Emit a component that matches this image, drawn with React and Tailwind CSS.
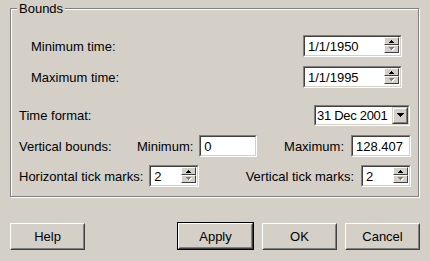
import React from "react";

function Sunken({ className = "", children }) {
  return (
    <div className={`border border-t-[#808080] border-l-[#808080] border-b-white border-r-white ${className}`}>
      <div className="h-full w-full border border-t-[#404040] border-l-[#404040] border-b-[#d4d0c8] border-r-[#d4d0c8] bg-white flex items-center">
        {children}
      </div>
    </div>
  );
}

function UpArrow() {
  return (
    <svg width="5" height="3" viewBox="0 0 5 3" shapeRendering="crispEdges">
      <rect x="2" y="0" width="1" height="1" fill="#000" />
      <rect x="1" y="1" width="3" height="1" fill="#000" />
      <rect x="0" y="2" width="5" height="1" fill="#000" />
    </svg>
  );
}

function DownArrowDisabled() {
  return (
    <svg width="6" height="4" viewBox="0 0 6 4" shapeRendering="crispEdges">
      <rect x="1" y="1" width="5" height="1" fill="#fff" />
      <rect x="2" y="2" width="3" height="1" fill="#fff" />
      <rect x="3" y="3" width="1" height="1" fill="#fff" />
      <rect x="0" y="0" width="5" height="1" fill="#808080" />
      <rect x="1" y="1" width="3" height="1" fill="#808080" />
      <rect x="2" y="2" width="1" height="1" fill="#808080" />
    </svg>
  );
}

function DownArrow() {
  return (
    <svg width="7" height="4" viewBox="0 0 7 4" shapeRendering="crispEdges">
      <rect x="0" y="0" width="7" height="1" fill="#000" />
      <rect x="1" y="1" width="5" height="1" fill="#000" />
      <rect x="2" y="2" width="3" height="1" fill="#000" />
      <rect x="3" y="3" width="1" height="1" fill="#000" />
    </svg>
  );
}

function SpinBtn({ children }) {
  return (
    <div className="w-[15px] h-[8px] bg-[#d4d0c8] border border-t-white border-l-white border-b-[#404040] border-r-[#404040] flex items-center justify-center">
      {children}
    </div>
  );
}

function Spinner({ value, className = "" }) {
  return (
    <Sunken className={`h-[22px] ${className}`}>
      <span className="flex-1 pl-[3px] leading-none">{value}</span>
      <div className="flex flex-col self-start mr-[1px]">
        <SpinBtn>
          <UpArrow />
        </SpinBtn>
        <SpinBtn>
          <DownArrowDisabled />
        </SpinBtn>
      </div>
    </Sunken>
  );
}

function TextField({ value, className = "" }) {
  return (
    <Sunken className={`h-[22px] ${className}`}>
      <span className="flex-1 pl-[3px] leading-none">{value}</span>
    </Sunken>
  );
}

function Button({ label, isDefault = false }) {
  const inner = (
    <div className="h-full w-full bg-[#d4d0c8] border border-t-white border-l-white border-b-[#404040] border-r-[#404040]">
      <div className="h-full w-full border border-t-[#d4d0c8] border-l-[#d4d0c8] border-b-[#808080] border-r-[#808080] flex items-center justify-center leading-none">
        {label}
      </div>
    </div>
  );
  if (isDefault) {
    return <div className="w-[77px] h-[28px] border border-black">{inner}</div>;
  }
  return <div className="w-[75px] h-[27px]">{inner}</div>;
}

export default function App() {
  return (
    <div className="w-[430px] h-[261px] bg-[#d4d0c8] pt-[8px] flex flex-col text-[13px] text-black font-['Liberation_Sans',Arial,sans-serif]">
      <div className="relative ml-[10px] w-[409px] h-[189px] border border-[#808080] shadow-[inset_1px_1px_0_#fff,1px_1px_0_#fff] pt-[26px] pl-[8px] pr-[7px] flex flex-col">
        <div className="absolute left-[6px] top-[-8px] px-[2px] bg-[#d4d0c8] leading-[15px]">Bounds</div>

        <div className="h-[22px] flex items-center">
          <span className="pl-[12px] leading-none">Minimum time:</span>
          <Spinner value="1/1/1950" className="ml-auto mr-[9px] w-[99px]" />
        </div>

        <div className="mt-[9px] h-[22px] flex items-center">
          <span className="pl-[12px] leading-none">Maximum time:</span>
          <Spinner value="1/1/1995" className="ml-auto mr-[9px] w-[99px]" />
        </div>

        <div className="mt-[16px] h-[22px] flex items-center">
          <span className="leading-none">Time format:</span>
          <Sunken className="ml-auto mr-[1px] w-[96px] h-[21px]">
            <span className="flex-1 pl-[1px] leading-none tracking-[-0.3px] whitespace-nowrap">31 Dec 2001</span>
            <div className="w-[16px] h-full bg-[#d4d0c8] border border-t-[#d4d0c8] border-l-[#d4d0c8] border-b-[#404040] border-r-[#404040]">
              <div className="h-full w-full border border-t-white border-l-white border-b-[#808080] border-r-[#808080] flex items-center justify-center">
                <DownArrow />
              </div>
            </div>
          </Sunken>
        </div>

        <div className="mt-[9px] h-[22px] flex items-center">
          <span className="w-[118px] leading-none">Vertical bounds:</span>
          <span className="leading-none">Minimum:</span>
          <TextField value="0" className="ml-[6px] w-[58px]" />
          <span className="ml-auto leading-none">Maximum:</span>
          <TextField value="128.407" className="ml-[7px] w-[60px]" />
        </div>

        <div className="mt-[8px] h-[22px] flex items-center">
          <span className="leading-none">Horizontal tick marks:</span>
          <Spinner value="2" className="ml-[6px] w-[50px]" />
          <span className="ml-auto leading-none">Vertical tick marks:</span>
          <Spinner value="2" className="ml-[7px] w-[50px]" />
        </div>
      </div>

      <div className="mt-[25px] px-[10px] flex items-center">
        <Button label="Help" />
        <div className="ml-auto flex items-center gap-[8px]">
          <Button label="Apply" isDefault />
          <Button label="OK" />
          <Button label="Cancel" />
        </div>
      </div>
    </div>
  );
}
